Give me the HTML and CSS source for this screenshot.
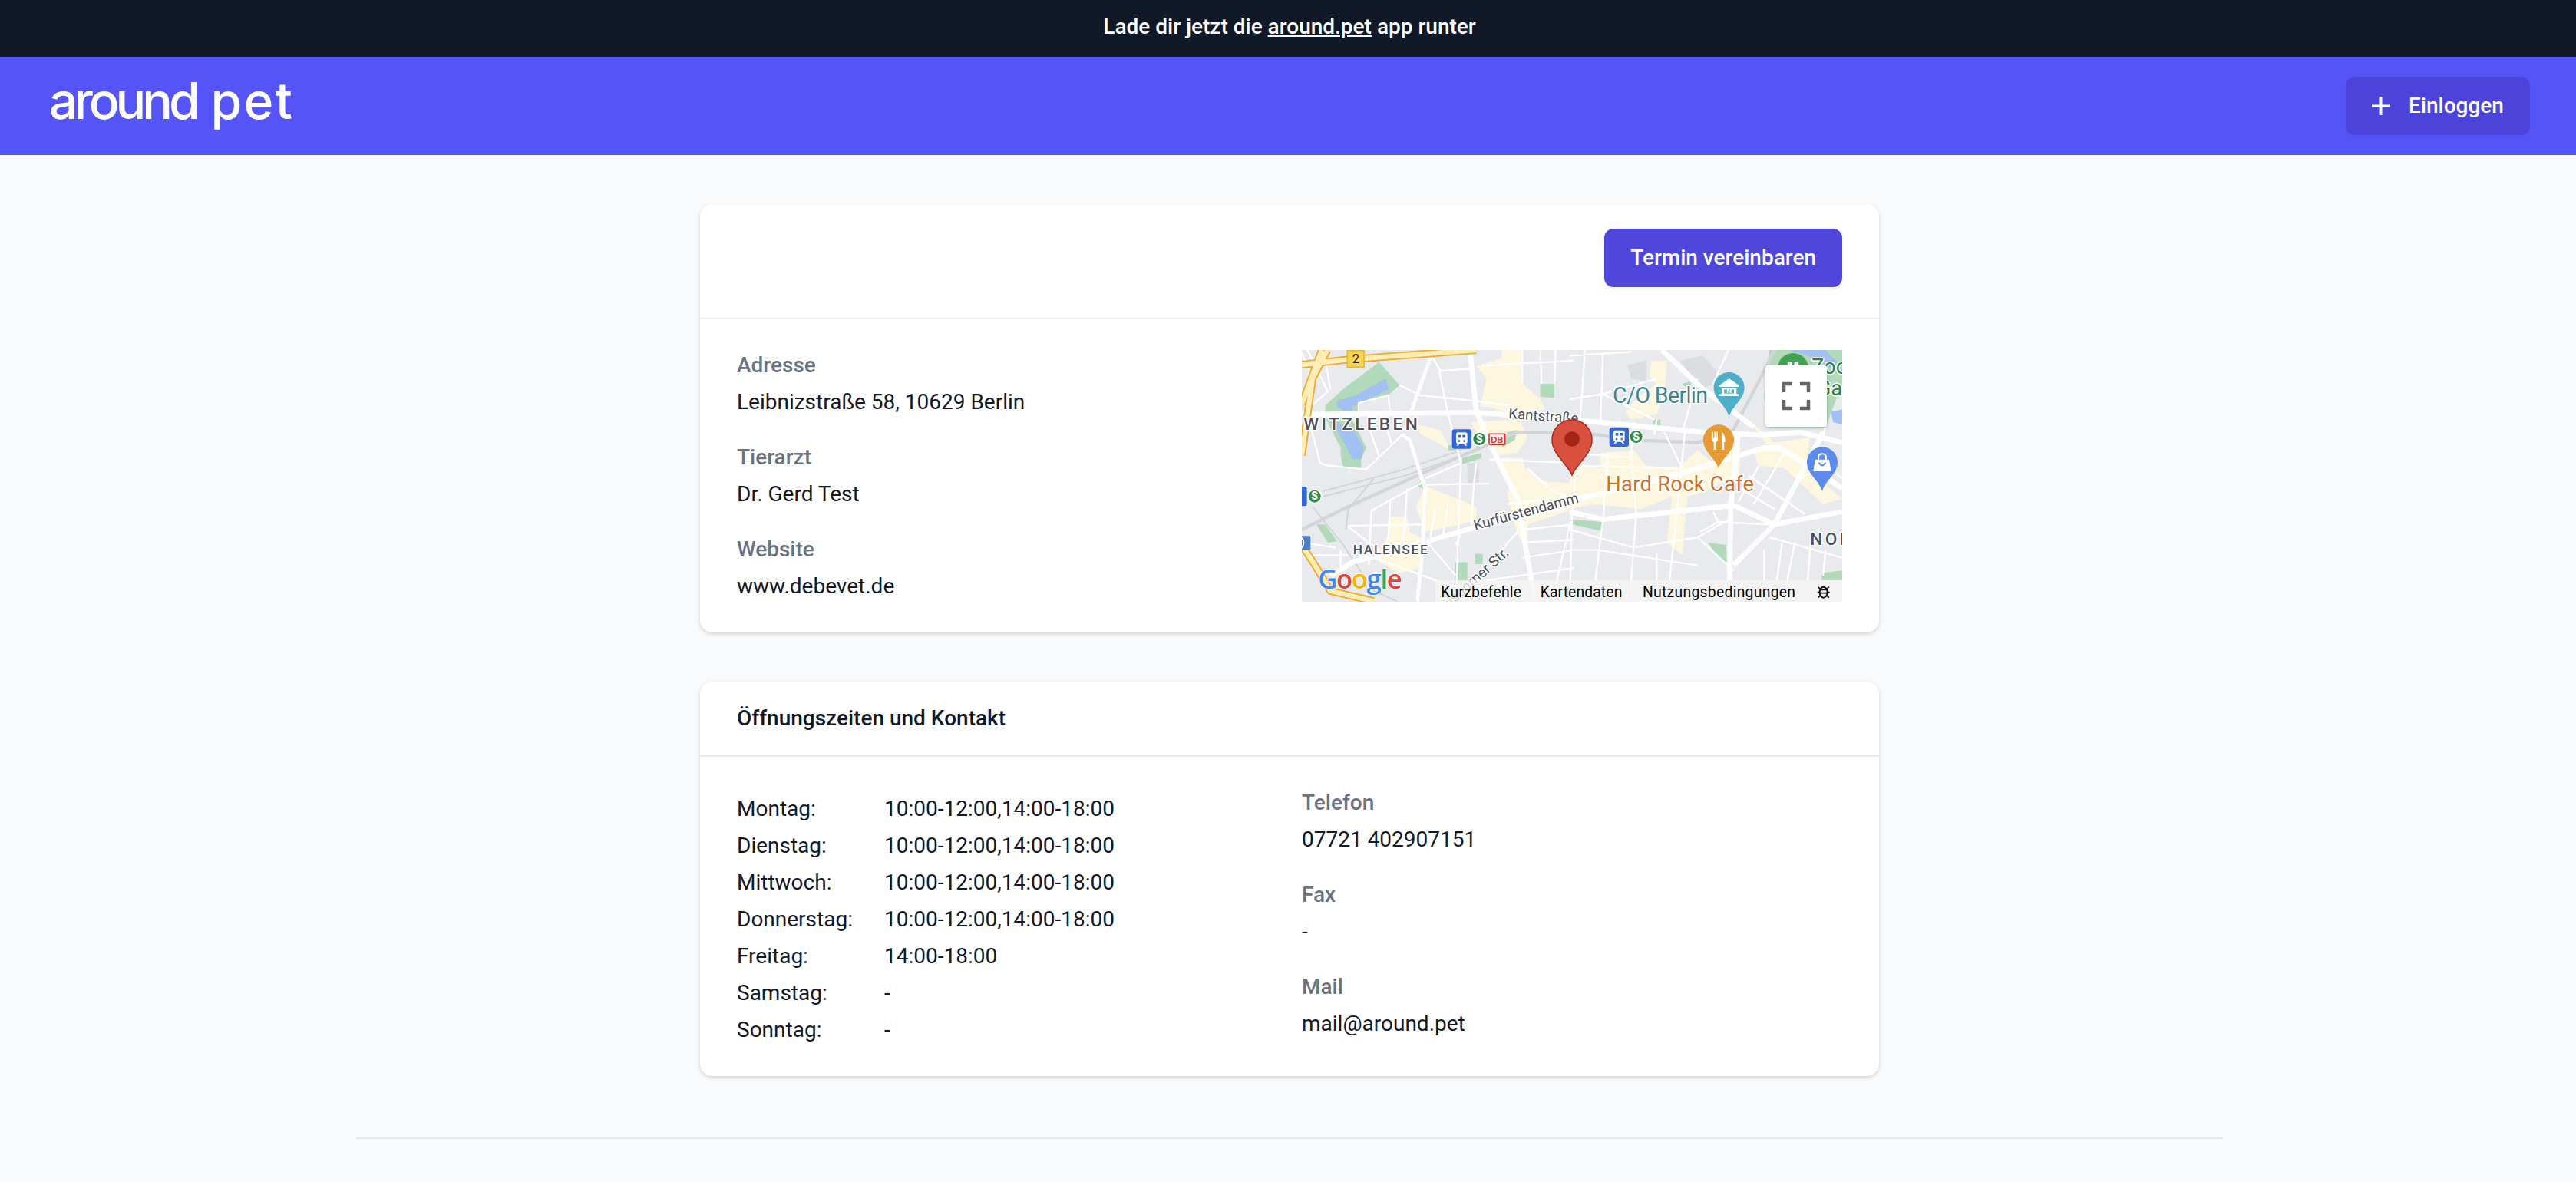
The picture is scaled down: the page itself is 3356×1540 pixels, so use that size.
FILE: index.html
```html
<!DOCTYPE html>
<html lang="de">
<head>
<meta charset="utf-8">
<title>around pet</title>
<link rel="stylesheet" href="styles.css">
</head>
<body>
<div class="page">
  <div class="promo"><span>Lade dir jetzt die <a class="promo-link" href="#">around.pet</a> app runter</span></div>
  <header class="topnav">
    <span class="logo"><span class="logo-a">around</span> <span class="logo-p">pet</span></span>
    <button class="login" type="button">
      <svg class="plus" viewBox="0 0 28 28"><path d="M14 2V26M2 14H26"/></svg>
      <span>Einloggen</span>
    </button>
  </header>
  <main class="main">
    <section class="card">
      <div class="card-head card-head-action">
        <button class="primary" type="button">Termin vereinbaren</button>
      </div>
      <div class="card-body columns">
        <div class="fields">
          <div class="field"><div class="label">Adresse</div><div class="value">Leibnizstraße 58, 10629 Berlin</div></div>
          <div class="field"><div class="label">Tierarzt</div><div class="value">Dr. Gerd Test</div></div>
          <div class="field"><div class="label">Website</div><div class="value">www.debevet.de</div></div>
        </div>
        <svg class="map" viewBox="0 0 704 328" width="704" height="328">
          <defs>
            <g id="train">
              <rect class="tr-bg" x="0" y="0" width="76" height="76" rx="9"/>
              <path class="tr-w" d="M24 12H52Q60 12 60 21V50Q60 56 53 56L59 64H51L46 57H30L25 64H17L23 56Q16 56 16 50V21Q16 12 24 12Z"/>
              <rect class="tr-bg" x="24" y="22" width="11" height="11"/>
              <rect class="tr-bg" x="41" y="22" width="11" height="11"/>
              <circle class="tr-bg" cx="28" cy="46" r="4"/>
              <circle class="tr-bg" cx="48" cy="46" r="4"/>
            </g>
            <g id="sbahn">
              <circle class="s-ring" cx="0" cy="0" r="29"/>
              <circle class="s-bg" cx="0" cy="0" r="24"/>
              <text class="s-t" x="0" y="14" text-anchor="middle">S</text>
            </g>
          </defs>
          <rect class="m-bg" width="704" height="328"/>

          <!-- west half, drawn in 3x units -->
          <g transform="translate(-6,-6) scale(.33333)">
            <path class="m-build" d="M665 460H710V540H665Z"/>
            <path class="m-yel" d="M800 18H880V150L950 210L970 250L820 262L750 240L715 240L740 130L700 80L800 50Z"/>
            <path class="m-yel" d="M470 310L560 330L600 410L480 345Z"/>
            <path class="m-yel" d="M680 300L870 290L900 360L860 420L780 430L720 380Z"/>
            <path class="m-yel" d="M790 440H880L890 480L960 530L1080 540V640L900 700V760H870L850 700L820 580L830 560Z"/>
            <path class="m-yel" d="M500 550L700 630V680L640 700L500 730L465 630Z"/>
            <path class="m-yel" d="M360 670H430L440 730L500 760L480 870L400 890L310 840L330 780L360 740Z"/>
            <path class="m-grn" d="M320 65L400 155L355 195L240 222V272H110V235L180 170Z"/>
            <path class="m-grn" d="M110 285L170 400V430L180 480H250V445L270 400L220 300Z"/>
            <path class="m-grn" d="M950 150H1005V205L950 200Z"/>
            <path class="m-grn" d="M645 440L720 420V440L645 465Z"/>
            <path class="m-grn" d="M460 545L490 530L500 565Z"/>
            <path class="m-grn" d="M615 848H665V925H615Z"/>
            <path class="m-grn" d="M695 815H725V855H695Z"/>
            <path class="m-grn" d="M75 700H110L155 765L120 772Z"/>
            <path class="m-grn" d="M590 390L610 390L630 410L590 410Z"/>
            <path class="m-grn" d="M820 340L860 330L850 370L800 400Z"/>
            <path class="m-wat" d="M345 130L360 170L300 200L215 240V272L155 240V215L230 195Z"/>
            <path class="m-wat" d="M155 300L220 330L260 400L250 445H215L185 385L155 330Z"/>
            <path class="m-rail" d="M18 720L200 630L600 450L860 340L1080 340"/>
            <path class="m-rail2" d="M100 570L400 490L640 410M100 590L420 510L660 425M60 630L180 780L300 960L390 1000M190 720L200 640L300 520"/>
            <path class="m-thin" d="M530 50L560 100L680 90M555 100L590 270M720 80L880 70M880 18V150M950 18L955 150M1010 18L1005 150M880 70L1080 60M400 155L480 195L680 215M680 215L830 235M240 270V225L355 195L365 265M110 60L130 170M45 290L90 460L120 470L270 485L410 350M270 290L320 435M340 290L370 390M590 270L640 460L620 1000M640 460L500 520M500 530L290 645L280 860M500 545L750 540M700 460L690 545L680 700M750 445L1080 460M900 480L1000 570L1080 600M540 640L520 750M590 620L570 740M365 600L355 760M430 560L415 770M200 710L320 800M200 705L490 700M300 830L600 940M500 760L620 900M18 770L150 790M30 820L200 820M170 800V870M820 620L1080 590M880 720L1080 700M890 770L1080 760M880 830L1080 800M860 730L640 980M1080 640L1000 980M650 720L620 780M730 920L1080 870M18 30L60 130M40 18L120 180L18 270"/>
            <path class="m-mid" d="M525 35L445 260M410 350L440 370L500 560L490 800L470 1000"/>
            <path class="m-thick" d="M18 270L700 262L1080 290M675 18L700 260L790 460L860 600L930 1000M130 900L220 845L320 820L700 710L1080 620"/>
            <path class="m-orange" d="M18 75L200 55L700 18M118 18L60 130L18 430M96 18L18 230M18 780L70 860L130 960L300 1000"/>
            <path class="m-cream" d="M18 75L200 55L700 18M118 18L60 130L18 430M96 18L18 230M18 780L70 860L130 960L300 1000"/>
          </g>

          <!-- east half, drawn in 3x units -->
          <g transform="translate(349,-6) scale(.33333)">
            <path class="m-build" d="M225 75L300 60V140L240 130Z"/>
            <path class="m-build" d="M430 60L520 40L600 130L520 170Z"/>
            <path class="m-yel" d="M320 60H380L370 180L340 270L240 290L220 260L260 210L340 150L310 120Z"/>
            <path class="m-yel" d="M120 420L250 410L300 470L420 480L500 410L560 460L640 400H670L660 510L500 580L460 590L440 820L380 770L400 590L280 640L100 620L0 640V470L120 480Z"/>
            <path class="m-yel" d="M700 290L800 380L940 360L920 480L1065 600L990 620L840 480L740 470L720 420L770 390Z"/>
            <path class="m-grn" d="M780 18H1065V150L1000 320H780L760 200Z"/>
            <path class="m-wat" d="M860 18H1000L1065 90V120L960 50Z"/>
            <path class="m-wat" d="M1020 260L1065 250V310L1030 300Z"/>
            <path class="m-grn" d="M540 770L610 780L615 850L580 830Z"/>
            <path class="m-grn" d="M0 680L130 690L125 725L10 700Z"/>
            <path class="m-grn" d="M985 890L1065 880V918H985Z"/>
            <path class="m-grn" d="M325 290H355V312H325Z"/>
            <path class="m-grn" d="M440 150L470 140L480 170L460 170Z"/>
            <path class="m-rail" d="M80 345L250 370L500 380L640 330L760 100L800 18"/>
            <path class="m-thin" d="M60 18L40 300L10 640L0 1000M130 30L120 300M0 40L240 25M0 210L130 190L340 130M130 190L330 290M340 290L330 350M370 340L440 480M450 340L420 640L390 920M250 300L240 430L260 660L240 920M150 420L130 680L100 920M0 420L250 440M0 470L420 480M0 720L250 790L500 750L640 670M500 750L640 880M340 810V920M0 800H110L500 860M560 650L580 690L780 700M510 730L580 690M780 750L1065 830M830 770L810 920M880 770L850 920M760 800V920M940 780L930 920M1000 800L990 900M670 560L800 640M700 510L920 660M740 470L660 610M840 420L720 620M920 480L800 690M620 18L560 150M440 340L500 130M1000 320L970 400M1040 500L1065 520"/>
            <path class="m-thick" d="M-50 620L400 510L760 400H820L920 460L1065 560M0 290L530 340L750 350L900 340L1065 380M0 650L130 680L640 625L800 700L1065 650M660 340L630 620L625 920M360 18L520 170L720 320M990 340L800 700L640 860"/>
          </g>

          <!-- labels -->
          <g transform="translate(-6,-6) scale(.33333)">
            <text class="m-txt m-district" x="25" y="330">WITZLEBEN</text>
            <text class="m-txt m-halensee" x="218" y="815">HALENSEE</text>
            <text class="m-txt m-street" transform="translate(825,285) rotate(4)">Kantstraße</text>
            <text class="m-txt m-street" transform="translate(695,722) rotate(-15)">Kurfürstendamm</text>
            <text class="m-txt m-street" text-anchor="end" transform="translate(830,815) rotate(-42)">Paulsborner Str.</text>
          </g>
          <g transform="translate(349,-6) scale(.33333)">
            <text class="m-txt m-coberlin" x="168" y="225" textLength="372">C/O Berlin</text>
            <text class="m-txt m-rock" x="142" y="570" textLength="578">Hard Rock Cafe</text>
            <text class="m-txt m-district" x="940" y="780">NOL</text>
            <text class="m-txt m-zoo" x="945" y="110">Zoo</text>
            <text class="m-txt m-zoo" x="965" y="195">Gar</text>
            <!-- zoo pin -->
            <path class="p-zoo" d="M873 30a60 60 0 0 1 60 60a60 60 0 0 1-60 60a60 60 0 0 1-60-60a60 60 0 0 1 60-60Z"/>
            <circle class="p-w" cx="860" cy="72" r="9"/>
            <circle class="p-w" cx="886" cy="72" r="9"/>
            <!-- museum pin -->
            <path class="p-mus" d="M623 105C590 105 563 132 563 165C563 210 610 235 623 278C636 235 683 210 683 165C683 132 656 105 623 105Z"/>
            <path class="p-w" d="M623 130L660 155V162H586V155ZM594 168H652V190H660V198H586V190H594Z"/>
            <path class="p-mus" d="M604 172H642V188H604Z"/>
            <text class="p-m" x="623" y="187" text-anchor="middle">M</text>
            <!-- restaurant pin -->
            <path class="p-food" d="M582 310C549 310 522 337 522 370C522 415 569 440 582 482C595 440 642 415 642 370C642 337 615 310 582 310Z"/>
            <path class="p-w" d="M556 338H561V362H565V338H570V362H574V338H579V366Q579 376 572 378V408H563V378Q556 376 556 366ZM596 338Q608 350 608 378H604V408H595V338Z"/>
            <!-- shop pin -->
            <path class="p-shop" d="M987 397C954 397 927 424 927 457C927 502 974 527 987 570C1000 527 1047 502 1047 457C1047 424 1020 397 987 397Z"/>
            <path class="p-w" d="M960 446H1014L1022 492H952Z"/>
            <path class="p-bag" d="M972 446V438Q972 424 987 424Q1002 424 1002 438V446"/>
            <path class="p-smile" d="M974 458Q987 480 1000 458"/>
            <use href="#train" x="155" y="320"/>
            <use href="#sbahn" x="260" y="357"/>
          </g>

          <!-- west transit + shields -->
          <g transform="translate(-6,-6) scale(.33333)">
            <use href="#train" x="605" y="328"/>
            <use href="#sbahn" x="712" y="366"/>
            <rect class="db" x="750" y="346" width="62" height="42" rx="3"/>
            <text class="db-t" x="781" y="380" text-anchor="middle">DB</text>
            <rect class="tr-bg" x="-38" y="552" width="76" height="76" rx="9"/>
            <use href="#sbahn" x="68" y="590"/>
            <rect class="tr-bg2" x="-10" y="745" width="62" height="54" rx="4"/>
            <path class="tr-arc" d="M18 752Q32 772 18 792"/>
            <rect class="shield" x="196" y="20" width="65" height="65"/>
            <text class="shield-t" x="229" y="68" text-anchor="middle">2</text>
            <text class="g-logo" x="82" y="950" textLength="328"><tspan class="g-b">G</tspan><tspan class="g-r">o</tspan><tspan class="g-y">o</tspan><tspan class="g-b">g</tspan><tspan class="g-g">l</tspan><tspan class="g-r">e</tspan></text>
          </g>
          <path class="m-marker" d="M352 91C337 91 326 103 326 117C326 136 346 148 352 163C358 148 378 136 378 117C378 103 367 91 352 91Z"/>
          <circle class="m-dot" cx="352" cy="116" r="10"/>

          <!-- attribution -->
          <rect class="m-bar" x="174" y="300" width="530" height="28"/>
          <g transform="translate(-6,-6) scale(.33333)">
            <text class="m-attr" x="562" y="985" textLength="314">Kurzbefehle</text>
            <text class="m-attr" x="950" y="985" textLength="320">Kartendaten</text>
          </g>
          <g transform="translate(349,-6) scale(.33333)">
            <text class="m-attr" x="285" y="985" textLength="597">Nutzungsbedingungen</text>
            <ellipse class="bug" cx="992" cy="965" rx="15" ry="21"/>
            <path class="bug-l" d="M977 955H1007M977 968H1007M970 944L980 952M1014 944L1004 952M968 965H977M1007 965H1016M970 986L980 978M1014 986L1004 978"/>
          </g>

          <!-- fullscreen -->
          <rect class="fs-btn" x="604" y="20" width="80" height="80" rx="3"/>
          <path class="fs-ico" d="M628 55V44H639M660 55V44H649M628 65V76H639M660 65V76H649"/>
        </svg>
      </div>
    </section>

    <section class="card card-second">
      <div class="card-head card-head-title"><h2 class="title">Öffnungszeiten und Kontakt</h2></div>
      <div class="card-body card-body-hours columns">
        <div class="hours">
          <span>Montag:</span><span>10:00-12:00,14:00-18:00</span>
          <span>Dienstag:</span><span>10:00-12:00,14:00-18:00</span>
          <span>Mittwoch:</span><span>10:00-12:00,14:00-18:00</span>
          <span>Donnerstag:</span><span>10:00-12:00,14:00-18:00</span>
          <span>Freitag:</span><span>14:00-18:00</span>
          <span>Samstag:</span><span>-</span>
          <span>Sonntag:</span><span>-</span>
        </div>
        <div class="fields">
          <div class="field"><div class="label">Telefon</div><div class="value">07721 402907151</div></div>
          <div class="field"><div class="label">Fax</div><div class="value">-</div></div>
          <div class="field"><div class="label">Mail</div><div class="value">mail@around.pet</div></div>
        </div>
      </div>
    </section>
  </main>
  <footer class="foot"></footer>
</div>
</body>
</html>
```
FILE: styles.css
```css
html, body { margin: 0; padding: 0; overflow: hidden; }
body { background: #f9fafb; font-family: Roboto, "Liberation Sans", sans-serif; color: #111827; font-size: 28px; line-height: 40px; }
.page { width: 3360px; height: 1540px; }

.promo { height: 74px; background: #111827; color: #fff; font-weight: 500; display: flex; align-items: center; justify-content: center; padding-bottom: 4px; box-sizing: border-box; }
.promo-link { color: #fff; text-decoration: underline; }

.topnav { height: 128px; background: #5555f7; display: flex; align-items: center; justify-content: space-between; padding: 0 64px; box-sizing: border-box; }
.logo { font-family: Inter, sans-serif; font-size: 66px; line-height: 66px; word-spacing: 1px; color: #fff; font-weight: 500; padding-bottom: 14px; }
.logo-a { letter-spacing: -5px; }
.logo-p { letter-spacing: 2.2px; }
.login { height: 76px; width: 240px; box-sizing: border-box; padding: 0 32px; border: 0; border-radius: 12px; background: #4c43db; color: #fff; font: 500 28px/40px Roboto, sans-serif; display: flex; align-items: center; gap: 22px; box-shadow: 0 2px 4px rgba(0,0,0,.06); }
.plus { width: 28px; height: 28px; flex: none; }
.plus path { stroke: #fff; stroke-width: 3; fill: none; }

.main { width: 1536px; margin: 0 auto; padding-top: 64px; }
.card { background: #fff; border-radius: 16px; box-shadow: 0 2px 6px rgba(0,0,0,.1), 0 2px 4px rgba(0,0,0,.06); }
.card-second { margin-top: 64px; }
.card-head { border-bottom: 2px solid #e5e7eb; padding: 0 48px; }
.card-head-action { display: flex; justify-content: flex-end; padding-top: 32px; padding-bottom: 40px; }
.card-head-title { padding-top: 28px; padding-bottom: 28px; }
.title { margin: 0; font-size: 28px; line-height: 40px; font-weight: 500; }
.primary { height: 76px; padding: 0 34px; border: 0; border-radius: 12px; background: #4f46dc; color: #fff; font: 500 28px/40px Roboto, sans-serif; box-shadow: 0 2px 4px rgba(0,0,0,.06); }

.card-body { padding: 40px 48px; }
.card-body-hours { padding-bottom: 36px; }
.columns { display: grid; grid-template-columns: 704px 704px; column-gap: 32px; align-items: start; }
.fields { display: flex; flex-direction: column; gap: 32px; }
.label { color: #6b7280; font-weight: 500; }
.value { margin-top: 8px; }

.hours { display: grid; grid-template-columns: 192px 1fr; grid-auto-rows: 48px; align-items: center; margin-top: 4px; }

.foot { width: 2432px; margin: 80px auto 0; border-top: 2px solid #e5e7eb; }

/* map */
.map { display: block; overflow: hidden; }
.m-bg { fill: #e8eaed; }
.m-build { fill: #dcdde1; }
.m-yel { fill: #fef7e0; }
.m-grn { fill: #b2d9b9; }
.m-wat { fill: #a3c0f4; }
.m-rail { fill: none; stroke: #d3d5d9; stroke-width: 13; stroke-linejoin: round; }
.m-rail2 { fill: none; stroke: #d3d5d9; stroke-width: 6; }
.m-thin { fill: none; stroke: #fff; stroke-width: 7; stroke-linejoin: round; }
.m-mid { fill: none; stroke: #fff; stroke-width: 14; stroke-linejoin: round; }
.m-thick { fill: none; stroke: #fff; stroke-width: 20; stroke-linejoin: round; }
.m-orange { fill: none; stroke: #f2a92a; stroke-width: 30; stroke-linejoin: round; }
.m-cream { fill: none; stroke: #fdeeb9; stroke-width: 19; stroke-linejoin: round; }
.m-txt { font-family: Roboto, sans-serif; paint-order: stroke; stroke: #fff; stroke-width: 9; stroke-linejoin: round; }
.m-district { font-size: 68px; font-weight: 500; fill: #4c5259; letter-spacing: 10px; }
.m-halensee { font-size: 52px; font-weight: 500; fill: #4c5259; letter-spacing: 5px; }
.m-street { font-size: 56px; fill: #4a4f55; }
.m-coberlin { font-size: 86px; fill: #3b8593; }
.m-rock { font-size: 82px; fill: #c8722a; }
.m-zoo { font-size: 82px; fill: #2e8540; }
.p-zoo { fill: #43a352; }
.p-mus { fill: #4eb0c8; }
.p-food { fill: #e59a33; }
.p-shop { fill: #5c8bec; }
.p-w { fill: #fff; }
.p-m { font-family: Roboto, sans-serif; font-weight: 700; font-size: 22px; fill: #fff; }
.p-bag { fill: none; stroke: #fff; stroke-width: 6; }
.p-smile { fill: none; stroke: #5c8bec; stroke-width: 6; }
.tr-bg { fill: #3367d6; }
.tr-bg2 { fill: #4a7fc7; }
.tr-arc { fill: none; stroke: #fff; stroke-width: 6; }
.tr-w { fill: #fff; }
.s-ring { fill: #fff; }
.s-bg { fill: #2f8c48; }
.s-t { font-family: Roboto, sans-serif; font-weight: 900; font-size: 42px; fill: #fff; }
.db { fill: #fff; stroke: #e0322b; stroke-width: 5; }
.db-t { font-family: "Liberation Sans", sans-serif; font-weight: 700; font-size: 34px; fill: #e0322b; }
.shield { fill: #f7d451; stroke: #e0ba3e; stroke-width: 5; }
.shield-t { font-family: Roboto, sans-serif; font-size: 50px; fill: #222; }
.g-logo { font-family: "Open Sans", sans-serif; font-weight: 600; font-size: 104px; paint-order: stroke; stroke: #fff; stroke-width: 4; }
.g-b { fill: #4285f4; }
.g-r { fill: #db4437; }
.g-y { fill: #f4b400; }
.g-g { fill: #34a853; }
.m-marker { fill: #d9503f; stroke: #b3271e; stroke-width: 1.5; }
.m-dot { fill: #a5241a; }
.m-bar { fill: #f5f5f5; opacity: .8; }
.m-attr { font-family: Roboto, sans-serif; font-size: 58px; fill: #000; }
.bug { fill: none; stroke: #111; stroke-width: 6; }
.bug-l { fill: none; stroke: #111; stroke-width: 5; }
.fs-btn { fill: #fff; filter: drop-shadow(0 1px 2px rgba(0,0,0,.25)); }
.fs-ico { fill: none; stroke: #666; stroke-width: 4.5; }
```
